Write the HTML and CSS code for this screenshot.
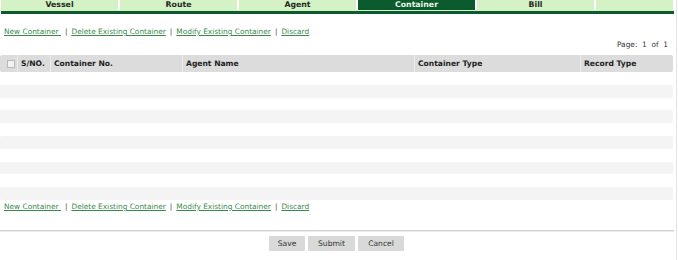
FILE: index.html
```html
<!DOCTYPE html>
<html>
<head>
<meta charset="utf-8">
<link rel="stylesheet" href="styles.css">
</head>
<body>
<div class="page">
  <div class="tabs">
    <div class="tab">Vessel</div>
    <div class="tab">Route</div>
    <div class="tab">Agent</div>
    <div class="tab active">Container</div>
    <div class="tab">Bill</div>
    <div class="tab empty"></div>
  </div>
  <div class="bar"></div>

  <div class="actions top">
    <a href="#">New Container </a><span class="sep">|</span><a href="#">Delete Existing Container</a><span class="sep">|</span><a href="#">Modify Existing Container</a><span class="sep">|</span><a href="#">Discard</a>
  </div>
  <div class="pager">Page:&nbsp; 1&nbsp; of&nbsp; 1</div>

  <div class="grid">
    <div class="head">
      <div class="c c-chk"><span class="chk"></span></div>
      <div class="c c-sno">S/NO.</div>
      <div class="c c-no">Container No.</div>
      <div class="c c-agent">Agent Name</div>
      <div class="c c-type">Container Type</div>
      <div class="c c-rec">Record Type</div>
    </div>
    <div class="row"></div>
    <div class="row alt"></div>
    <div class="row"></div>
    <div class="row alt"></div>
    <div class="row"></div>
    <div class="row alt"></div>
    <div class="row"></div>
    <div class="row alt"></div>
    <div class="row"></div>
    <div class="row alt"></div>
  </div>

  <div class="actions bottom">
    <a href="#">New Container </a><span class="sep">|</span><a href="#">Delete Existing Container</a><span class="sep">|</span><a href="#">Modify Existing Container</a><span class="sep">|</span><a href="#">Discard</a>
  </div>

  <div class="rule"></div>

  <div class="buttons">
    <button class="btn save">Save</button>
    <button class="btn submit">Submit</button>
    <button class="btn cancel">Cancel</button>
  </div>
</div>
</body>
</html>
```

FILE: styles.css
```css
* { box-sizing: border-box; }
html, body { margin: 0; padding: 0; background: #fff; }
body { font-family: "DejaVu Sans", Verdana, sans-serif; font-size: 7.4px; color: #333; }

.page { width: 677px; height: 260px; border-right: 1px solid #e4e4e4; }

.tabs { display: flex; gap: 2px; padding-left: 1px; height: 10px; }
.tab {
  width: 117px; height: 10px; line-height: 10px;
  background: #d4f2c6; color: #1f2a1f;
  text-align: center; font-weight: bold; font-size: 7.8px;
}
.tab.active { background: #0c5b2e; color: #e8f5e8; }
.tab.empty { width: 77px; }
.bar { height: 4px; width: 673px; background: #0c5b2e; border-top: 1px solid #d4f2c6; margin-left: 1px; }

.actions { padding-left: 4px; font-size: 7.4px; color: #333; line-height: 10px; }
.actions a { color: #3a8a4c; text-decoration: underline; }
.actions .sep { margin: 0 4px; color: #444; }
.actions.top { margin-top: 13px; }
.actions.bottom { margin-top: 2px; }

.pager { text-align: right; padding-right: 8px; margin-top: 3px; line-height: 10px; font-size: 7.4px; color: #333; }

.grid { margin-top: 5px; width: 673px; }
.head {
  display: grid;
  grid-template-columns: 17px 33px 132px 232px 166px 1fr;
  height: 17px; background: #dcdcdc; font-weight: bold; color: #1e1e1e;
  border-radius: 2px;
}
.head .c { display: flex; align-items: center; padding-left: 3px; border-left: 1px solid #ececec; font-size: 7.6px; }
.head .c:first-child { border-left: none; padding-left: 7px; }
.chk { width: 8px; height: 8px; border: 1px solid #b9b9b9; background: #f2f2f2; display: block; }

.row { height: 12.8px; background: #fff; }
.row.alt { background: #f4f4f4; border-radius: 2px; }

.rule { margin-top: 18px; height: 2px; width: 674px; border-top: 1px solid #d2d2d2; border-bottom: 1px solid #ececec; }

.buttons { display: flex; justify-content: center; gap: 3px; margin-top: 4px; padding-right: 3px; }
.btn {
  height: 15px; border: none; background: #d9d9d9; color: #333;
  font-family: "DejaVu Sans", Verdana, sans-serif; font-size: 7.6px; padding: 0; border-radius: 1px;
}
.btn.save { width: 36px; }
.btn.submit { width: 47px; }
.btn.cancel { width: 46px; }
```
